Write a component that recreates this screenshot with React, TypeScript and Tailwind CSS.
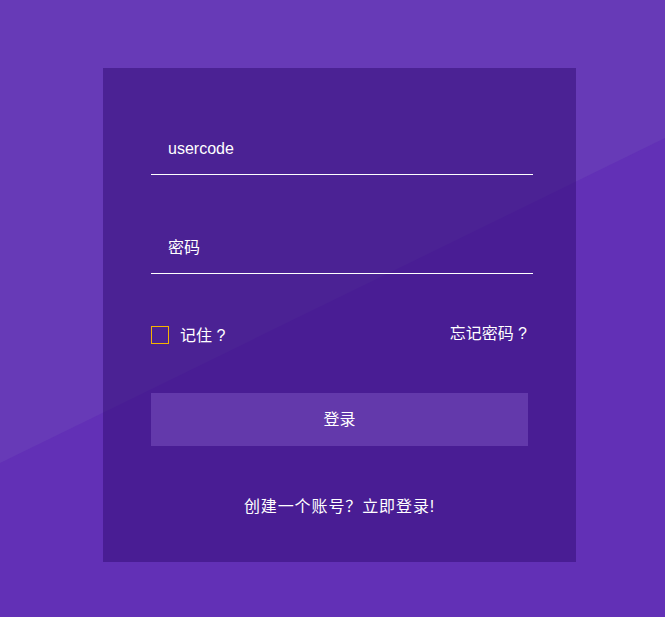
import React from "react";

export default function App() {
  return (
    <div className="relative w-[665px] h-[617px] overflow-hidden bg-[#6230b6]" style={{ fontFamily: '"Liberation Sans", "Noto Sans CJK SC", sans-serif' }}>
      <div className="absolute inset-0 bg-[#673ab7] [clip-path:polygon(0_0,100%_0,100%_138px,0_463px)]" />
      <div className="relative ml-[103px] pt-[68px]">
        <div className="w-[473px] h-[494px] bg-[rgba(52,15,120,0.55)] pl-[48px] pr-[43px] pt-[54px] box-border">
          <div className="h-[53px] border-b border-white flex items-center pl-[17px] pt-[1px] text-white text-[16px]">
            usercode
          </div>
          <div className="mt-[46px] h-[53px] border-b border-white flex items-center pl-[17px] pt-[1px] text-white text-[16px]">
            密码
          </div>
          <div className="mt-[50px] w-[377px] h-[20px] flex items-center justify-between text-white text-[16px]">
            <div className="flex items-center">
              <div className="w-[18px] h-[18px] border border-[#f5b300] mt-[1px]" />
              <span className="ml-[11px] mt-[3px]">记住 ?</span>
            </div>
            <span className="-mt-[1px] mr-[1px]">忘记密码 ?</span>
          </div>
          <div className="mt-[49px] w-[377px] h-[53px] bg-[#6339ab] flex items-center justify-center text-white text-[16px]">
            登录
          </div>
          <div className="mt-[49px] w-[377px] h-[24px] flex items-center justify-center text-white text-[16px] tracking-[0.9px]">
            创建一个账号？立即登录!
          </div>
        </div>
      </div>
    </div>
  );
}
